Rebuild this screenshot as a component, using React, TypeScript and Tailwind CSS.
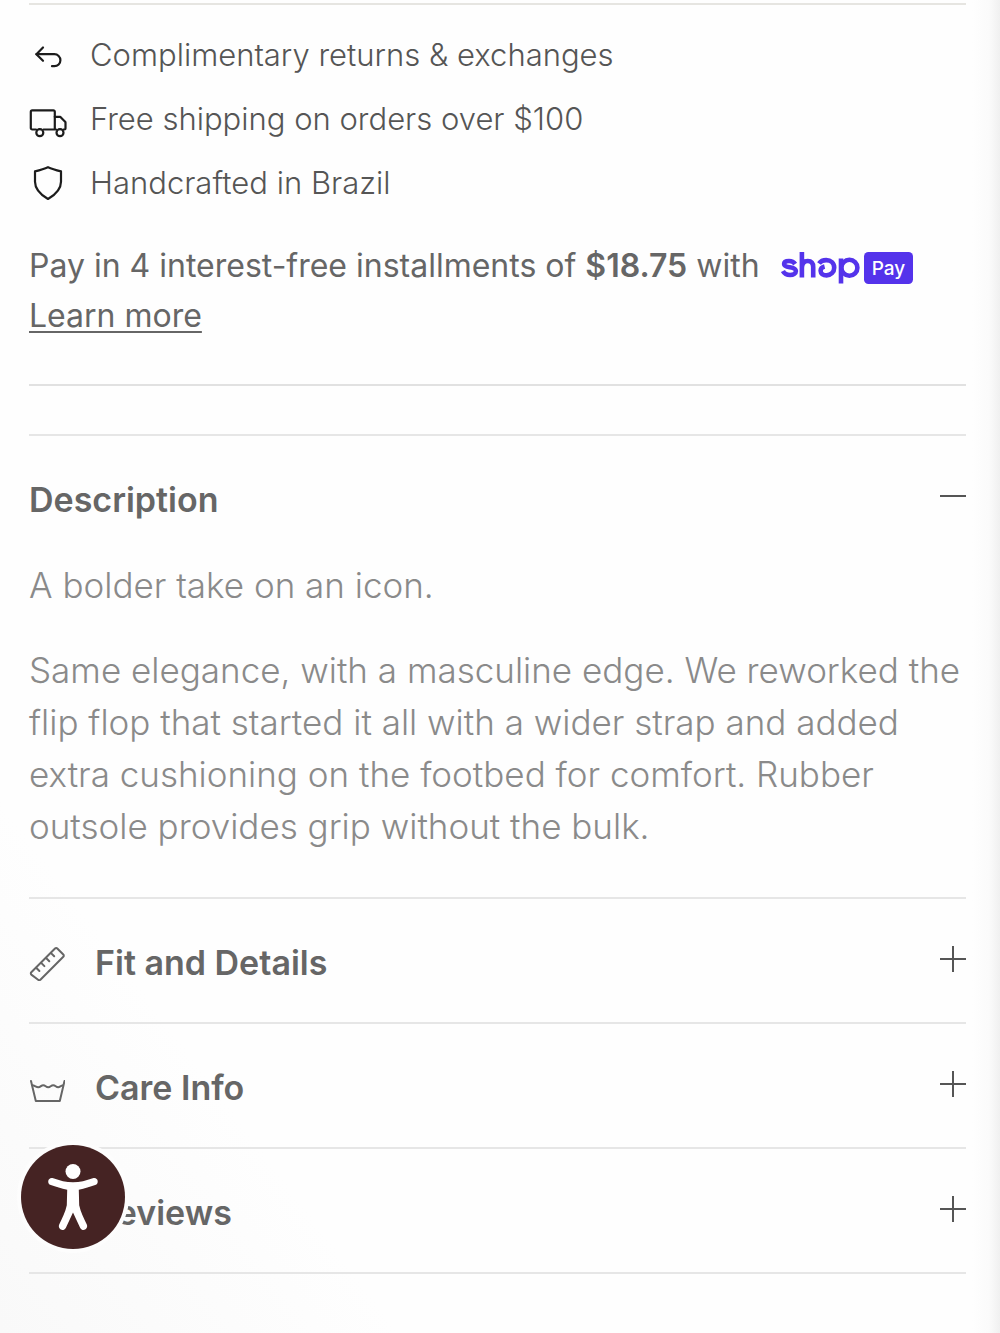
import { useState } from "react";
import type { ReactNode } from "react";

function ReturnIcon() {
    return (
        <svg viewBox="0 0 38 38" className="h-[38px] w-[38px]" fill="none" stroke="currentColor" strokeWidth="2.2" strokeLinecap="round" strokeLinejoin="round">
            <path d="M14 11.500 7.400 18.200l6.600 6.600" />
            <path d="M7.400 18.200h18a6 6 0 0 1 0 12H23" />
        </svg>
    );
}

function TruckIcon() {
    return (
        <svg viewBox="0 0 38 38" className="h-[38px] w-[38px]" fill="none" stroke="currentColor" strokeWidth="2.2" strokeLinecap="round" strokeLinejoin="round">
            <path d="M7 29.500H3.200A1.400 1.400 0 0 1 1.800 28.100V11.700a1.400 1.400 0 0 1 1.400-1.400h21.200a1.400 1.400 0 0 1 1.400 1.400V29.500M14.500 29.500h12.500" />
            <path d="M25.800 16.800h5.400l4.900 4.900a1 1 0 0 1 .4.800V28.500a1 1 0 0 1-1 1H34.500" />
            <circle cx="10.800" cy="32.700" r="3.500" />
            <circle cx="31" cy="32.700" r="3.500" />
        </svg>
    );
}

function ShieldIcon() {
    return (
        <svg viewBox="0 0 38 38" className="h-[38px] w-[38px]" fill="none" stroke="currentColor" strokeWidth="2.2" strokeLinejoin="round">
            <path d="M19 3.200c4 1.800 8.300 3 13 4.200v10.300c0 8-6.500 13.500-13 17.300-6.500-3.800-13-9.300-13-17.300V7.400C10.700 6.200 15 5 19 3.200z" />
        </svg>
    );
}

function RulerIcon() {
    return (
        <svg viewBox="0 0 36 36" className="h-9 w-9" fill="none" stroke="currentColor" strokeWidth="2" strokeLinecap="round" strokeLinejoin="round">
            <path d="M2.300 27.300 26 3.500a1.600 1.600 0 0 1 2.300 0l6 6a1.600 1.600 0 0 1 0 2.300L11.400 34.700a1.600 1.600 0 0 1-2.300 0l-6.800-5.100a1.600 1.600 0 0 1 0-2.300z" />
            <path d="m7.200 22.800 3.200 3.200M12.200 17.900l3.200 3.200M17.100 13l3.200 3.200M22 8.100l3.200 3.200" />
        </svg>
    );
}

function WashIcon() {
    return (
        <svg viewBox="0 0 36 36" className="h-9 w-9" fill="none" stroke="currentColor" strokeWidth="2" strokeLinecap="round" strokeLinejoin="round">
            <path d="M2 11 6.800 31h24L35.500 11" />
            <path d="M3.200 15.200c2.500.2 4 2 6 2 2.600 0 2.800-2 5-2 2.400 0 2.600 2 5 2s2.600-2 5-2 2.600 2 5 2c1.700 0 2.600-1.700 4.900-2" />
        </svg>
    );
}

function ShopPayLogo() {
    return (
        <svg viewBox="0 0 132 34" className="ml-3 inline-block h-[34px] w-[132px] align-middle" role="img" aria-label="Shop Pay">
            <g fill="none" stroke="#5433eb" strokeWidth="4.600">
                <path d="M14.200 13C12.800 11 10.800 10 8 10c-3 0-4.900 1.200-4.900 3 0 4.800 11.800 1.600 11.800 7 0 2.400-2.400 4-5.800 4-3.500 0-6-1.500-7.200-4" />
                <path d="M20.900 1v25.500M20.900 17c0-4.600 2.200-7 5.900-7 3.600 0 5.400 2.300 5.400 6.200v10.300" />
                <path d="M38 12.500c1.600-2.200 4.200-3.400 7.200-3.400 4.600 0 8 3.100 8 7.600s-3.400 7.700-7.600 7.700c-3.600 0-6-2-6-4.600 0-2.200 1.500-3.700 4-4.300" />
                <path d="M60 7.500v25" />
                <circle cx="68.400" cy="16.700" r="8" />
            </g>
            <rect x="83" y="1" width="49" height="32" rx="4.500" fill="#5433eb" />
            <text x="107.500" y="24" textAnchor="middle" fill="#fff" fontSize="19" fontWeight="500" fontFamily="Inter, sans-serif">
                Pay
            </text>
        </svg>
    );
}

const perks = [
    { icon: <ReturnIcon />, text: "Complimentary returns & exchanges" },
    { icon: <TruckIcon />, text: "Free shipping on orders over $100" },
    { icon: <ShieldIcon />, text: "Handcrafted in Brazil" },
];

interface SectionProps {
    title: string;
    icon?: ReactNode;
    children?: ReactNode;
    defaultOpen?: boolean;
}

function Section({ title, icon, children, defaultOpen = false }: SectionProps) {
    const [open, setOpen] = useState(defaultOpen);

    return (
        <section className="border-b-2 border-[#e6e6e6]">
            <h2>
                <button
                    type="button"
                    aria-expanded={open}
                    onClick={() => setOpen(!open)}
                    className="flex w-full items-center pt-10 pb-9 text-left text-[34px] leading-[47px] font-semibold text-[#666]"
                >
                    {icon && <span className="w-[66px] shrink-0">{icon}</span>}
                    <span className="grow">{title}</span>
                    <svg viewBox="0 0 26 26" className="mb-2 h-[26px] w-[26px] shrink-0" stroke="#555" strokeWidth="2">
                        <path d="M0 13h26" />
                        {!open && <path d="M13 0v26" />}
                    </svg>
                </button>
            </h2>
            {open && children}
        </section>
    );
}

export default function App() {
    return (
        <div className="relative min-h-screen bg-[#fefefe] bg-linear-to-tr from-[#f9f9f9] to-[#fefefe] to-20% font-[Inter,sans-serif]">
            <main className="pt-[3px] pr-[34px] pb-14 pl-[29px]">
                <ul className="flex flex-col gap-4 border-t-2 border-[#e6e5e1] pt-[26px]">
                    {perks.map((perk) => (
                        <li key={perk.text} className="flex items-center text-[31px] leading-[48px] font-light text-[#555]">
                            <span className="w-[61px] shrink-0 text-[#1c1c1c]">{perk.icon}</span>
                            {perk.text}
                        </li>
                    ))}
                </ul>

                <p className="mt-[34px] text-[32px] leading-[50px] text-[#666]">
                    Pay in 4 interest-free installments of <strong className="font-semibold">$18.75</strong> with <ShopPayLogo />
                    <br />
                    <a href="#learn-more" className="underline decoration-2 underline-offset-4">
                        Learn more
                    </a>
                </p>

                <hr className="mt-[43px] border-t-2 border-[#e1e1e1]" />

                <div className="mt-12 border-t-2 border-[#e6e6e6]">
                    <Section title="Description" defaultOpen>
                        <div className="flex flex-col gap-[33px] pb-[45px] text-[35px] leading-[52px] font-light text-[#8a8a8a]">
                            <p>A bolder take on an icon.</p>
                            <p>
                                Same elegance, with a masculine edge. We reworked the flip flop that started it all with a wider strap and added extra
                                cushioning on the footbed for comfort. Rubber outsole provides grip without the bulk.
                            </p>
                        </div>
                    </Section>
                    <Section title="Fit and Details" icon={<RulerIcon />} />
                    <Section title="Care Info" icon={<WashIcon />} />
                    <Section title="Reviews" icon={<span className="block h-9 w-9" />} />
                </div>
            </main>

            {/* soft edge shadow */}
            <div className="pointer-events-none absolute inset-y-0 right-0 w-7 bg-linear-to-l from-[#f0f0f0] via-[#fbfbfb] via-40% to-transparent" />

            <button
                type="button"
                aria-label="Accessibility options"
                className="fixed bottom-[84px] left-[21px] h-[104px] w-[104px] rounded-full bg-[#452323] ring-4 ring-[#fdfdfd]"
            >
                <svg viewBox="0 0 104 104" className="h-full w-full" fill="#fff">
                    <circle cx="52" cy="26.500" r="7.500" />
                    <path d="M32.200 33.200c6.500 2.300 13 4.100 19.800 4.100s13.300-1.800 19.800-4.100c5-1.700 7 5.200 2.400 6.900-5 1.900-10.500 3.300-16.400 4.700l.4 15.400c1.400 7.200 4.600 12.600 7.600 19.400 1.900 4.800-4.400 7.600-6.700 3.100L52 67.500l-7.100 15.200c-2.300 4.500-8.600 1.700-6.700-3.100 3-6.800 6.200-12.200 7.600-19.400l.4-15.400c-5.900-1.400-11.400-2.800-16.400-4.700-4.600-1.700-2.600-8.600 2.400-6.900z" />
                </svg>
            </button>
        </div>
    );
}
